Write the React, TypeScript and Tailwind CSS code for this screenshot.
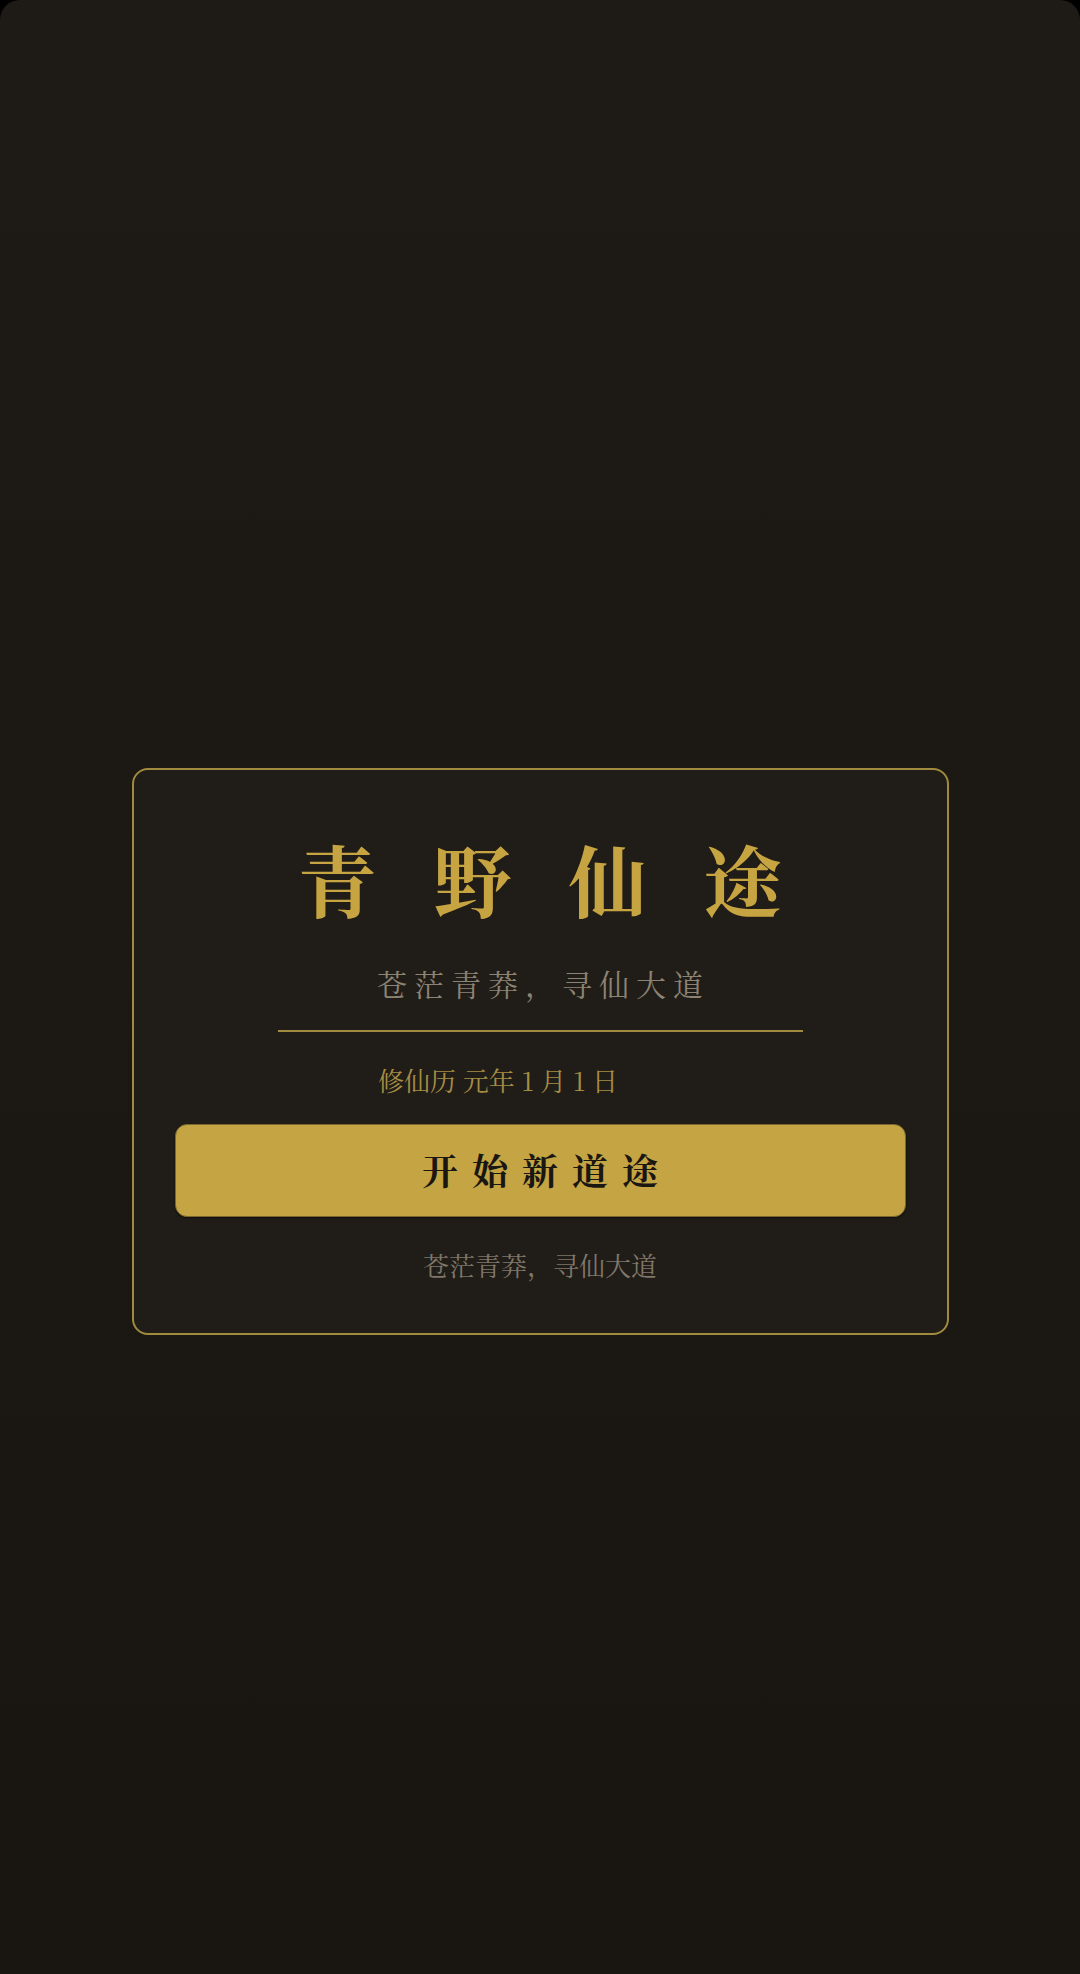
const serif = "font-['Noto_Serif_CJK_SC','Noto_Sans_CJK_SC',serif]";

function Title() {
  const chars = ['青', '野', '仙', '途'];
  return (
    <div className={`flex justify-center gap-[57px] text-[78px] leading-[76px] font-bold text-[#c6a441] ${serif}`}>
      {chars.map((c) => (
        <span key={c}>{c}</span>
      ))}
    </div>
  );
}

export default function App() {
  return (
    <div className="min-h-[1974px] w-[1080px] bg-black">
      <div className="flex h-[1974px] w-full flex-col items-center justify-center rounded-t-[20px] bg-gradient-to-b from-[#1e1b16] to-[#191612] pt-[128px]">
        <div className="w-[817px] rounded-[16px] border-2 border-[#a08a3e] bg-[#201c17] px-[41px] pt-[70px] pb-[51px]">
          <Title />

          <p className={`mt-[49px] pl-[7px] text-center text-[30px] leading-[36px] tracking-[7px] text-[#8c8373] ${serif}`}>
            苍茫青莽，寻仙大道
          </p>

          <div className="mx-auto mt-[29px] h-[2px] w-[525px] bg-[#a08a3e]" />

          <p className={`mt-[32px] pr-[84px] text-center text-[26px] leading-[32px] text-[#a68d45] ${serif}`}>
            修仙历 元年 1 月 1 日
          </p>

          <button
            className={`mt-[28px] flex h-[93px] w-full items-center justify-center rounded-[12px] border border-[#7a6630] bg-[#c4a443] pl-[14px] text-[36px] font-bold tracking-[14px] text-[#1a1611] shadow-[0_1px_2px_rgba(0,0,0,0.5)] ${serif}`}
          >
            开始新道途
          </button>

          <p className={`mt-[31px] text-center text-[26px] leading-[34px] text-[#7f776a] ${serif}`}>
            苍茫青莽，寻仙大道
          </p>
        </div>
      </div>
    </div>
  );
}
